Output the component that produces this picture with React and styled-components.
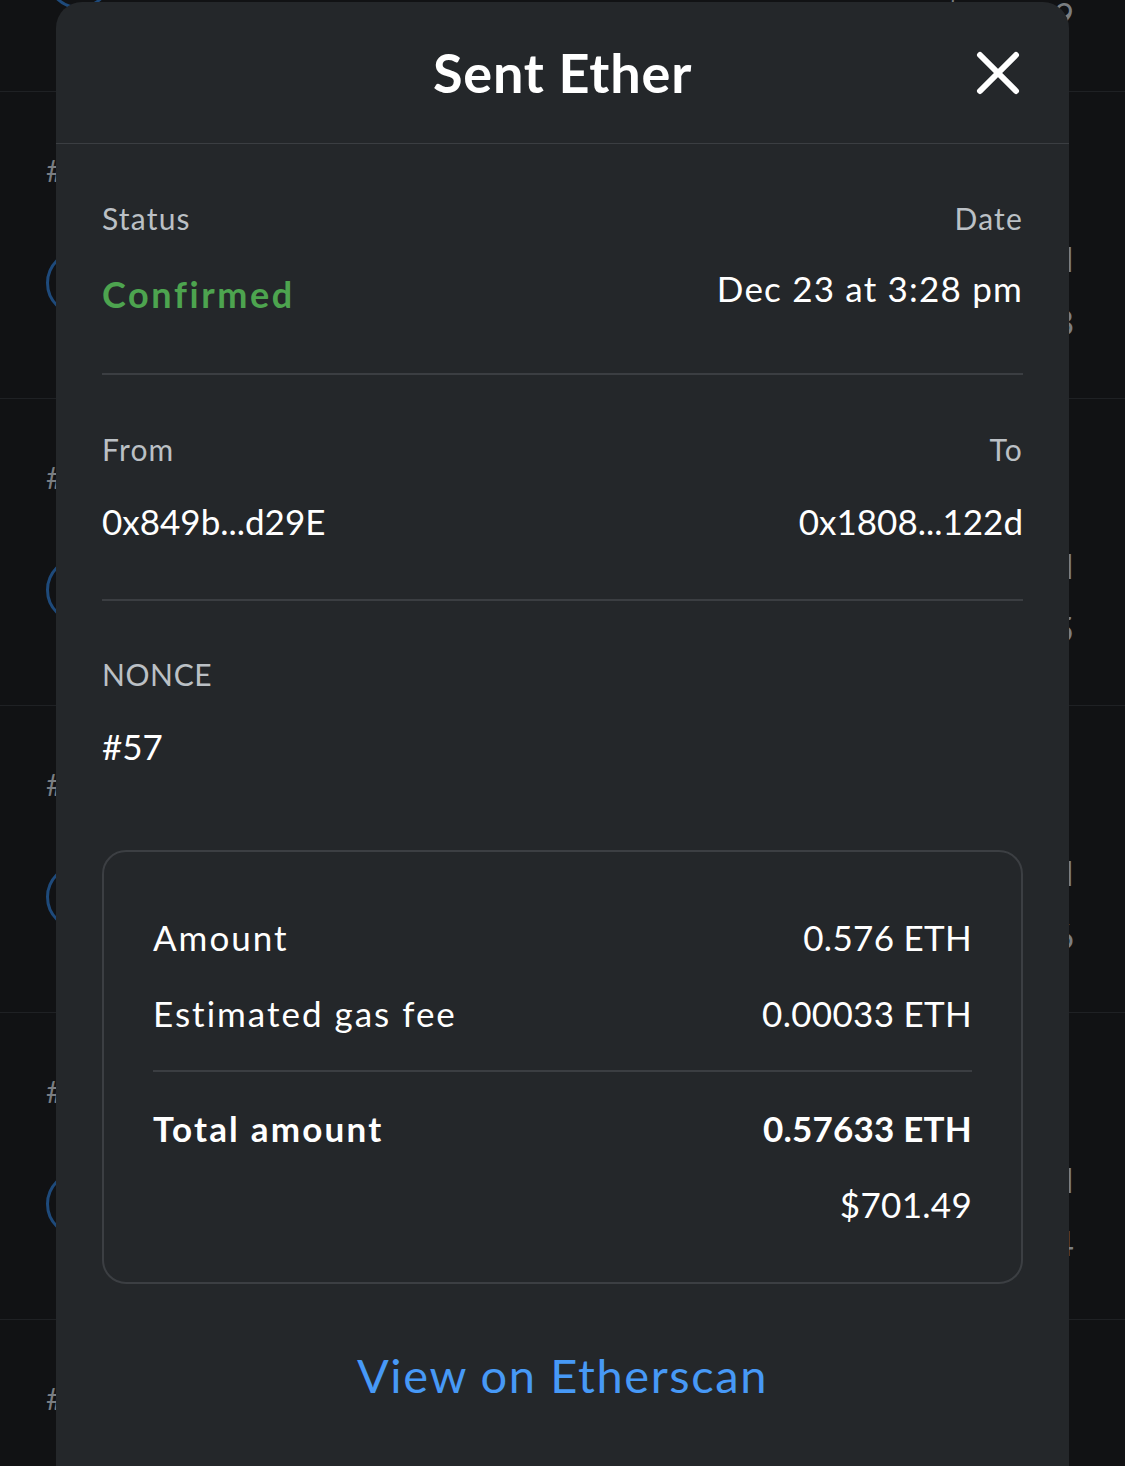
import React from "react";
import styled, { createGlobalStyle } from "styled-components";

const Global = createGlobalStyle`
  html, body { margin: 0; padding: 0; background: #111214; }
  body { font-family: "Lato", "Inter", "Liberation Sans", sans-serif; overflow: hidden; }
`;

const Page = styled.div`
  position: relative;
  width: 1125px;
  height: 1466px;
  overflow: hidden;
  background: #111214;
`;

const List = styled.div`
  display: flex;
  flex-direction: column;
  margin-top: -215px;
`;

const Row = styled.div`
  height: 306px;
  border-bottom: 1px solid #1f2124;
  display: flex;
  justify-content: space-between;
  padding: 0 50px 0 46px;
`;

const RowLeft = styled.div`
  display: flex;
  flex-direction: column;
  padding-top: 60px;
  gap: 62px;
`;

const Nonce = styled.span`
  font-size: 30px;
  color: #7a7e82;
`;

const Circle = styled.div`
  width: 60px;
  height: 60px;
  border-radius: 50%;
  border: 3px solid #1e4a7b;
`;

const RowRight = styled.div`
  display: flex;
  flex-direction: column;
  align-items: flex-end;
  padding-top: 146px;
  gap: 22px;
  color: #7a7e82;
  font-size: 34px;
  letter-spacing: 1px;
`;

const Modal = styled.div`
  position: absolute;
  left: 56px;
  top: 2px;
  width: 1013px;
  height: 1500px;
  background: #24272a;
  border-radius: 26px;
  display: flex;
  flex-direction: column;
`;

const Header = styled.div`
  height: 141px;
  border-bottom: 1px solid #3b3e42;
  display: flex;
  align-items: center;
  justify-content: center;
  position: relative;
`;

const Title = styled.h1`
  margin: 0;
  font-family: "Lato", sans-serif;
  font-weight: 700;
  font-size: 54px;
  color: #ffffff;
  letter-spacing: 0.8px;
`;

const CloseBtn = styled.button`
  position: absolute;
  right: 48px;
  top: 48px;
  background: none;
  border: none;
  padding: 0;
  width: 46px;
  height: 46px;
  display: flex;
  align-items: center;
  justify-content: center;
  cursor: pointer;
`;

const Body = styled.div`
  padding: 0 46px;
  display: flex;
  flex-direction: column;
`;

const Section = styled.div`
  display: flex;
  justify-content: space-between;
  padding: ${(p) => p.$pt || 0}px 0 ${(p) => p.$pb || 0}px;
  border-bottom: ${(p) => (p.$divider ? "2px solid #3b3e42" : "none")};
`;

const Col = styled.div`
  display: flex;
  flex-direction: column;
  align-items: ${(p) => (p.$right ? "flex-end" : "flex-start")};
  gap: ${(p) => p.$gap || 36}px;
`;

const Label = styled.span`
  font-size: 30px;
  line-height: 36px;
  color: #bbc0c5;
  letter-spacing: ${(p) => (p.$caps ? "0.6px" : "1.2px")};
`;

const Value = styled.span`
  font-size: 35px;
  line-height: 40px;
  color: #ffffff;
  letter-spacing: ${(p) => (p.$num ? "0" : "1.2px")};
`;

const Confirmed = styled.span`
  font-size: 36px;
  line-height: 44px;
  font-weight: 700;
  color: #4da44f;
  letter-spacing: 2.6px;
`;

const SummaryBox = styled.div`
  margin-top: 84px;
  border: 2px solid #3c3f43;
  border-radius: 24px;
  padding: 47px 49px 40px;
  display: flex;
  flex-direction: column;
`;

const SummaryRow = styled.div`
  display: flex;
  justify-content: space-between;
  align-items: center;
  height: 76px;
  font-size: 35px;
  color: #ffffff;
  font-weight: ${(p) => (p.$bold ? 700 : 400)};
`;

const RowLabel = styled.span`
  letter-spacing: ${(p) => (p.$bold ? "2.2px" : "2px")};
`;

const RowAmount = styled.span`
  letter-spacing: ${(p) => (p.$bold ? "0.2px" : "0.3px")};
`;

const Divider = styled.div`
  height: 2px;
  background: #3b3e42;
  margin: 19px 0 18px;
`;

const Link = styled.a`
  margin-top: 63px;
  align-self: center;
  font-size: 47px;
  color: #4799f6;
  text-decoration: none;
  letter-spacing: 1.6px;
`;

const rows = [
  { n: "#58", a: "-0.1 ETH", u: "$121.69" },
  { n: "#57", a: "-0.576 ETH", u: "$701.48" },
  { n: "#56", a: "-0.2 ETH", u: "$243.35" },
  { n: "#55", a: "-0.3 ETH", u: "$365.26" },
  { n: "#54", a: "-0.1 ETH", u: "$121.84" },
  { n: "#53", a: "-0.1 ETH", u: "$121.84" },
];

export default function App() {
  return (
    <Page>
      <Global />
      <List>
        {rows.map((r, i) => (
          <Row key={i}>
            <RowLeft>
              <Nonce>{r.n}</Nonce>
              <Circle />
            </RowLeft>
            <RowRight>
              <span>{r.a}</span>
              <span>{r.u}</span>
            </RowRight>
          </Row>
        ))}
      </List>
      <Modal>
        <Header>
          <Title>Sent Ether</Title>
          <CloseBtn aria-label="Close">
            <svg width="44" height="44" viewBox="0 0 44 44">
              <path d="M4 4 L40 40 M40 4 L4 40" stroke="#fff" strokeWidth="6" strokeLinecap="round" />
            </svg>
          </CloseBtn>
        </Header>
        <Body>
          <Section $pt={56} $pb={57} $divider>
            <Col $gap={36}>
              <Label>Status</Label>
              <Confirmed>Confirmed</Confirmed>
            </Col>
            <Col $right $gap={32}>
              <Label>Date</Label>
              <Value>Dec 23 at 3:28 pm</Value>
            </Col>
          </Section>
          <Section $pt={56} $pb={58} $divider>
            <Col $gap={34}>
              <Label>From</Label>
              <Value $num>0x849b...d29E</Value>
            </Col>
            <Col $right $gap={34}>
              <Label>To</Label>
              <Value $num>0x1808...122d</Value>
            </Col>
          </Section>
          <Section $pt={55}>
            <Col $gap={34}>
              <Label $caps>NONCE</Label>
              <Value $num>#57</Value>
            </Col>
          </Section>
          <SummaryBox>
            <SummaryRow>
              <RowLabel>Amount</RowLabel>
              <RowAmount>0.576 ETH</RowAmount>
            </SummaryRow>
            <SummaryRow>
              <RowLabel>Estimated gas fee</RowLabel>
              <RowAmount>0.00033 ETH</RowAmount>
            </SummaryRow>
            <Divider />
            <SummaryRow $bold>
              <RowLabel $bold>Total amount</RowLabel>
              <RowAmount $bold>0.57633 ETH</RowAmount>
            </SummaryRow>
            <SummaryRow>
              <span />
              <RowAmount>$701.49</RowAmount>
            </SummaryRow>
          </SummaryBox>
          <Link href="#">View on Etherscan</Link>
        </Body>
      </Modal>
    </Page>
  );
}
